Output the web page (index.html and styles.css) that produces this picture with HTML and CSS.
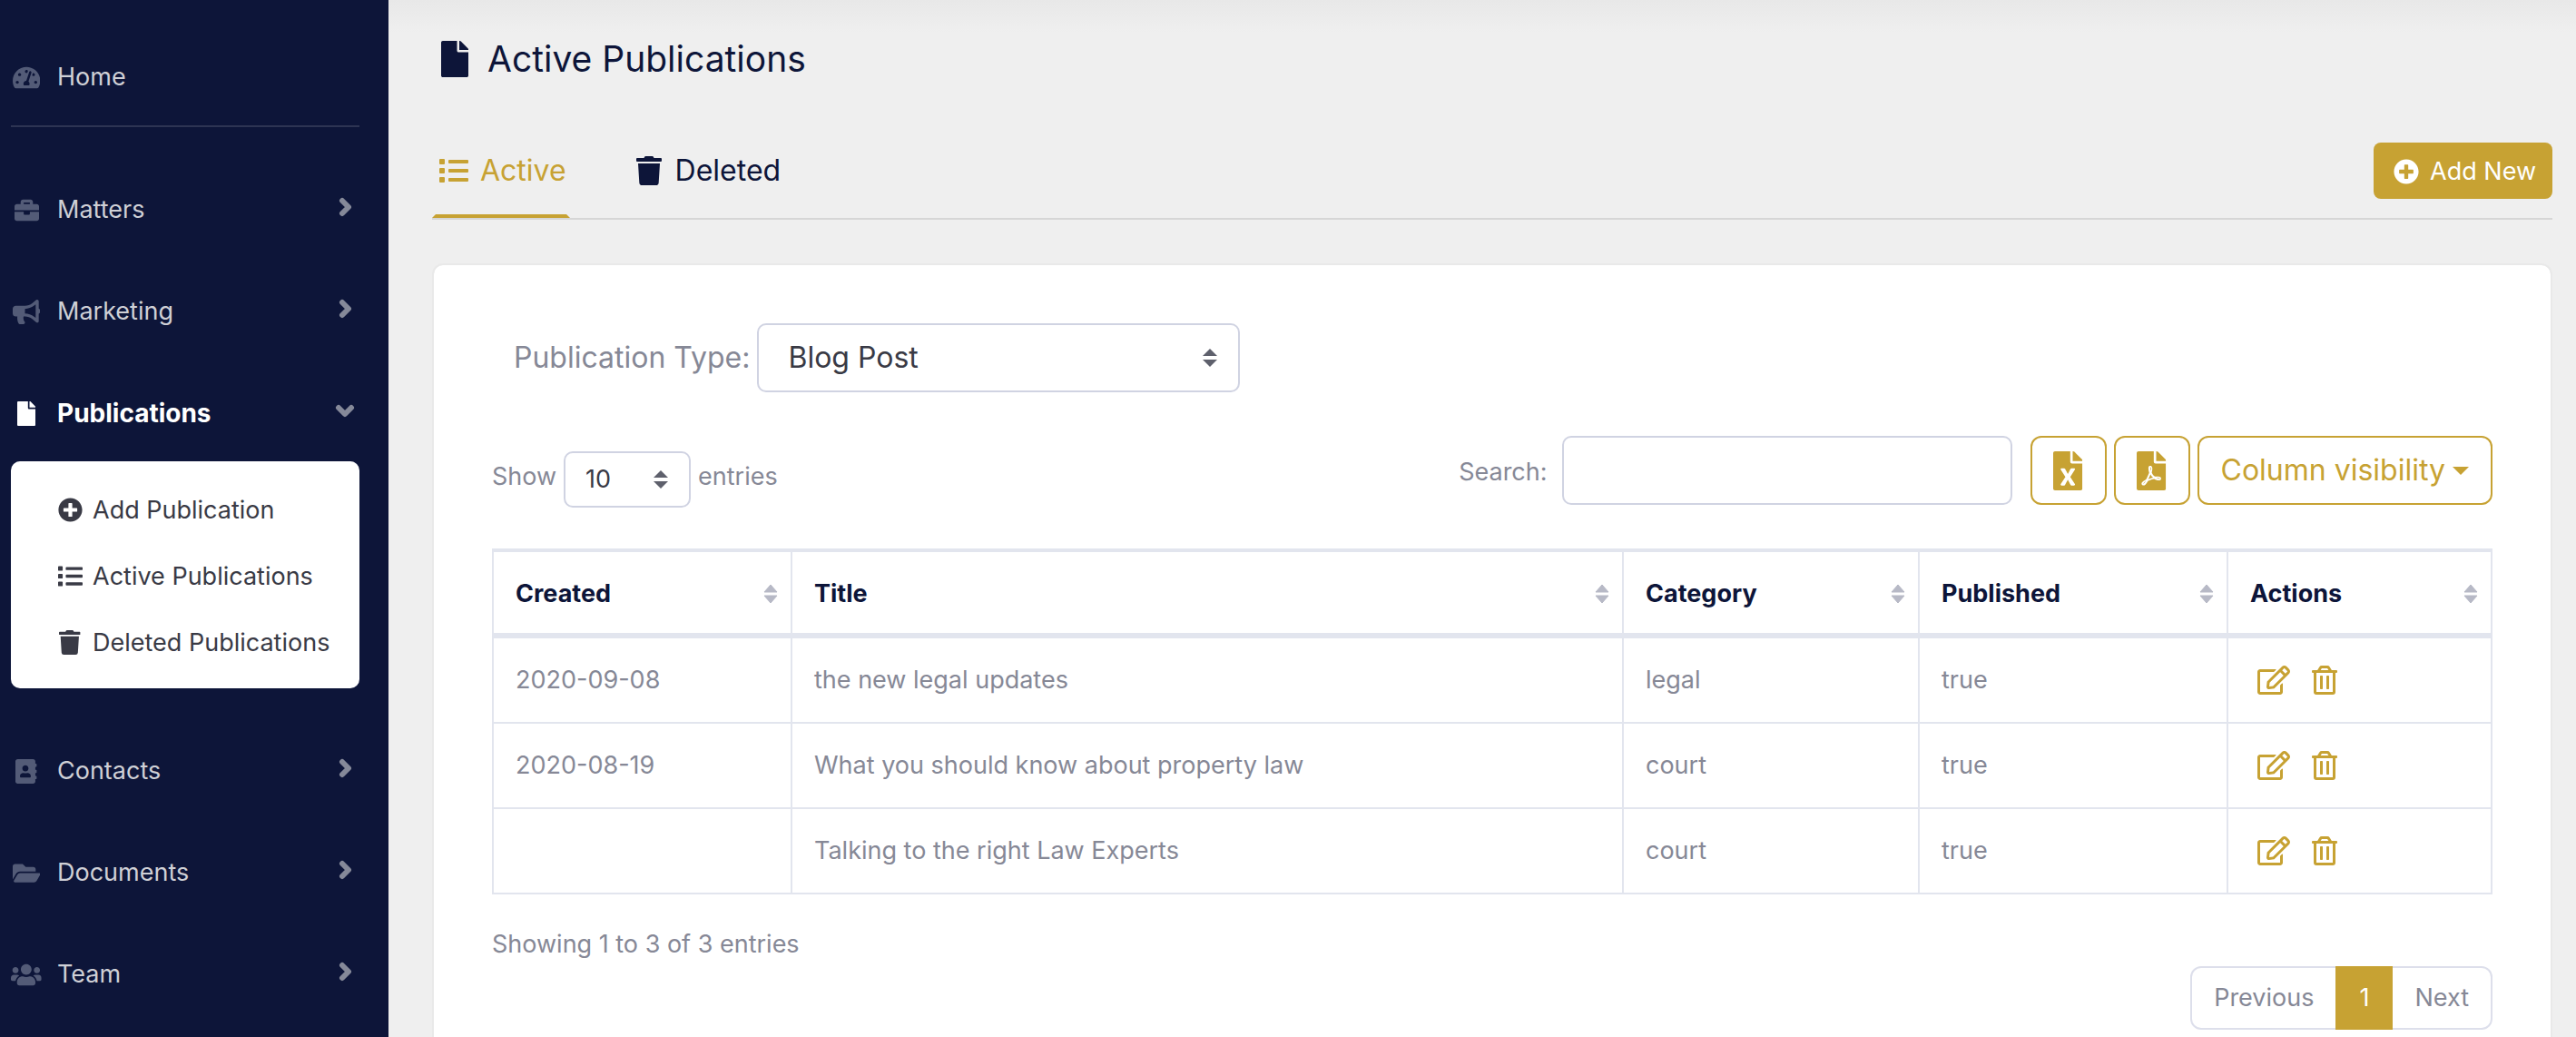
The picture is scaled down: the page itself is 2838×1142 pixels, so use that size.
FILE: index.html
```html
<!DOCTYPE html>
<html lang="en">
<head>
<meta charset="utf-8">
<meta name="viewport" content="width=device-width, initial-scale=1">
<title>Active Publications</title>
<link rel="stylesheet" href="styles.css">
</head>
<body>
<svg class="sprite" aria-hidden="true">
  <symbol id="i-gauge" viewBox="0 0 576 512"><path d="M288 32C128.940 32 0 160.940 0 320c0 52.800 14.250 102.260 39.060 144.800 5.610 9.620 16.300 15.200 27.440 15.200h443c11.140 0 21.830-5.580 27.440-15.200C561.750 422.260 576 372.800 576 320c0-159.060-128.940-288-288-288zm0 64c14.710 0 26.580 10.130 30.320 23.650-1.110 2.260-2.640 4.230-3.450 6.670l-9.220 27.670c-5.130 3.490-10.970 6.010-17.640 6.010-17.670 0-32-14.330-32-32S270.330 96 288 96zM96 384c-17.670 0-32-14.330-32-32s14.330-32 32-32 32 14.330 32 32-14.330 32-32 32zm48-160c-17.670 0-32-14.330-32-32s14.330-32 32-32 32 14.330 32 32-14.330 32-32 32zm246.770-72.410l-61.330 184C343.130 347.330 352 364.540 352 384c0 11.720-3.380 22.550-8.880 32H232.880c-5.500-9.450-8.880-20.280-8.880-32 0-33.940 26.500-61.430 59.900-63.590l61.340-184.010c4.170-12.560 17.730-19.450 30.360-15.170 12.570 4.190 19.350 17.790 15.170 30.360zm14.660 57.200l15.520-46.550c3.470-1.290 7.130-2.230 11.050-2.230 17.670 0 32 14.330 32 32s-14.330 32-32 32c-11.380-.010-20.890-6.280-26.570-15.220zM480 384c-17.670 0-32-14.330-32-32s14.330-32 32-32 32 14.330 32 32-14.330 32-32 32z"/></symbol>
  <symbol id="i-briefcase" viewBox="0 0 512 512"><path d="M320 336c0 8.840-7.160 16-16 16h-96c-8.840 0-16-7.160-16-16v-48H0v144c0 25.600 22.400 48 48 48h416c25.600 0 48-22.400 48-48V288H320v48zm144-208h-80V80c0-25.600-22.400-48-48-48H176c-25.600 0-48 22.400-48 48v48H48c-25.600 0-48 22.400-48 48v80h512v-80c0-25.600-22.400-48-48-48zm-144 0H192V96h128v32z"/></symbol>
  <symbol id="i-bullhorn" viewBox="0 0 576 512"><path d="M576 240c0-23.630-12.950-44.040-32-55.120V32.010C544 23.260 537.020 0 512 0c-7.120 0-14.190 2.380-19.980 7.020l-85.030 68.030C364.280 109.190 310.660 128 256 128H64c-35.350 0-64 28.650-64 64v96c0 35.350 28.650 64 64 64h33.700c-1.390 10.480-2.180 21.140-2.180 32 0 39.770 9.260 77.350 25.560 110.940 5.190 10.690 16.520 17.060 28.400 17.060h74.280c26.050 0 41.690-29.840 25.900-50.560-16.400-21.520-26.150-48.360-26.150-77.440 0-11.110 1.620-21.790 4.410-32H256c54.660 0 108.280 18.810 150.980 52.950l85.030 68.030a32.023 32.023 0 0 0 19.980 7.020c24.920 0 32-22.780 32-32V295.130C563.050 284.040 576 263.630 576 240zm-96 141.420l-33.050-26.440C392.950 311.780 325.120 288 256 288v-96c69.120 0 136.950-23.780 190.950-66.980L480 98.580v282.840z"/></symbol>
  <symbol id="i-file" viewBox="0 0 384 512"><path d="M224 136V0H24C10.700 0 0 10.700 0 24v464c0 13.300 10.700 24 24 24h336c13.300 0 24-10.700 24-24V160H248c-13.200 0-24-10.800-24-24zm160-14.100v6.100H256V0h6.100c6.400 0 12.500 2.500 17 7l97.900 98c4.500 4.500 7 10.600 7 16.900z"/></symbol>
  <symbol id="i-contacts" viewBox="0 0 448 512"><path d="M436 160c6.600 0 12-5.400 12-12v-40c0-6.600-5.400-12-12-12h-20V48c0-26.500-21.500-48-48-48H48C21.500 0 0 21.500 0 48v416c0 26.500 21.500 48 48 48h320c26.500 0 48-21.500 48-48v-48h20c6.600 0 12-5.400 12-12v-40c0-6.600-5.400-12-12-12h-20v-64h20c6.600 0 12-5.400 12-12v-40c0-6.600-5.400-12-12-12h-20v-64h20zm-228-32c35.300 0 64 28.700 64 64s-28.700 64-64 64-64-28.700-64-64 28.700-64 64-64zm112 236.800c0 10.600-10 19.200-22.400 19.200H118.400C106 384 96 375.400 96 364.800v-19.200c0-31.800 30.100-57.600 67.200-57.600h5c12.300 5.100 25.700 8 39.800 8s27.600-2.900 39.800-8h5c37.100 0 67.200 25.800 67.200 57.600v19.200z"/></symbol>
  <symbol id="i-folder" viewBox="0 0 576 512"><path d="M572.694 292.093L500.270 416.248A63.997 63.997 0 0 1 444.989 448H45.025c-18.523 0-30.064-20.093-20.731-36.093l72.424-124.155A64 64 0 0 1 152 256h399.964c18.523 0 30.064 20.093 20.730 36.093zM152 224h328v-48c0-26.510-21.490-48-48-48H272l-64-64H48C21.490 64 0 85.490 0 112v278.046l69.077-118.418C86.214 242.250 117.989 224 152 224z"/></symbol>
  <symbol id="i-users" viewBox="0 0 640 512"><path d="M96 224c35.300 0 64-28.700 64-64s-28.700-64-64-64-64 28.700-64 64 28.700 64 64 64zm448 0c35.300 0 64-28.700 64-64s-28.700-64-64-64-64 28.700-64 64 28.700 64 64 64zm32 32h-64c-17.600 0-33.500 7.100-45.100 18.600 40.300 22.100 68.900 62 75.100 109.400h66c17.700 0 32-14.300 32-32v-32c0-35.300-28.700-64-64-64zm-256 0c61.900 0 112-50.100 112-112S381.900 32 320 32 208 82.100 208 144s50.100 112 112 112zm76.800 32h-8.300c-20.800 10-43.900 16-68.500 16s-47.600-6-68.500-16h-8.300C179.600 288 128 339.600 128 403.200V432c0 26.500 21.500 48 48 48h288c26.500 0 48-21.500 48-48v-28.800c0-63.600-51.600-115.200-115.200-115.200zm-223.700-13.400C161.500 263.100 145.600 256 128 256H64c-35.300 0-64 28.700-64 64v32c0 17.700 14.300 32 32 32h65.900c6.300-47.400 34.900-87.300 75.200-109.400z"/></symbol>
  <symbol id="i-plus" viewBox="0 0 512 512"><path d="M256 8C119 8 8 119 8 256s111 248 248 248 248-111 248-248S393 8 256 8zm144 276c0 6.600-5.400 12-12 12h-92v92c0 6.600-5.400 12-12 12h-56c-6.600 0-12-5.400-12-12v-92h-92c-6.600 0-12-5.400-12-12v-56c0-6.600 5.400-12 12-12h92v-92c0-6.600 5.400-12 12-12h56c6.600 0 12 5.400 12 12v92h92c6.600 0 12 5.400 12 12v56z"/></symbol>
  <symbol id="i-list" viewBox="0 0 512 512"><path d="M80 368H16a16 16 0 0 0-16 16v64a16 16 0 0 0 16 16h64a16 16 0 0 0 16-16v-64a16 16 0 0 0-16-16zm0-320H16A16 16 0 0 0 0 64v64a16 16 0 0 0 16 16h64a16 16 0 0 0 16-16V64a16 16 0 0 0-16-16zm0 160H16a16 16 0 0 0-16 16v64a16 16 0 0 0 16 16h64a16 16 0 0 0 16-16v-64a16 16 0 0 0-16-16zm416 176H176a16 16 0 0 0-16 16v32a16 16 0 0 0 16 16h320a16 16 0 0 0 16-16v-32a16 16 0 0 0-16-16zm0-320H176a16 16 0 0 0-16 16v32a16 16 0 0 0 16 16h320a16 16 0 0 0 16-16V80a16 16 0 0 0-16-16zm0 160H176a16 16 0 0 0-16 16v32a16 16 0 0 0 16 16h320a16 16 0 0 0 16-16v-32a16 16 0 0 0-16-16z"/></symbol>
  <symbol id="i-trash" viewBox="0 0 448 512"><path d="M432 32H312l-9.400-18.700A24 24 0 0 0 281.100 0H166.800a23.720 23.720 0 0 0-21.400 13.300L136 32H16A16 16 0 0 0 0 48v32a16 16 0 0 0 16 16h416a16 16 0 0 0 16-16V48a16 16 0 0 0-16-16zM53.200 467a48 48 0 0 0 47.900 45h245.800a48 48 0 0 0 47.900-45L416 128H32z"/></symbol>
  <symbol id="i-trash-line" viewBox="0 0 448 512"><path d="M268 416h24a12 12 0 0 0 12-12V188a12 12 0 0 0-12-12h-24a12 12 0 0 0-12 12v216a12 12 0 0 0 12 12zM432 80h-82.410l-34-56.700A48 48 0 0 0 274.410 0H173.590a48 48 0 0 0-41.160 23.300L98.410 80H16A16 16 0 0 0 0 96v16a16 16 0 0 0 16 16h16v336a48 48 0 0 0 48 48h288a48 48 0 0 0 48-48V128h16a16 16 0 0 0 16-16V96a16 16 0 0 0-16-16zM171.840 50.910A6 6 0 0 1 177 48h94a6 6 0 0 1 5.150 2.910L293.610 80H154.390zM368 464H80V128h288zm-212-48h24a12 12 0 0 0 12-12V188a12 12 0 0 0-12-12h-24a12 12 0 0 0-12 12v216a12 12 0 0 0 12 12z"/></symbol>
  <symbol id="i-edit" viewBox="0 0 576 512"><path d="M402.300 344.900l32-32c5-5 13.700-1.500 13.700 5.700V464c0 26.500-21.500 48-48 48H48c-26.500 0-48-21.500-48-48V112c0-26.500 21.500-48 48-48h273.500c7.100 0 10.700 8.600 5.700 13.700l-32 32c-1.500 1.500-3.500 2.300-5.700 2.300H48v352h352V350.500c0-2.100.8-4.100 2.300-5.600zm156.600-201.800L296.300 405.700l-90.400 10c-26.200 2.900-48.500-19.200-45.600-45.600l10-90.400L432.900 17.100c22.900-22.900 59.900-22.900 82.700 0l43.200 43.200c22.900 22.900 22.900 60 .1 82.800zM460.100 174L402 115.900 216.200 301.800l-7.300 65.300 65.300-7.300L460.100 174zm64.800-79.700l-43.200-43.200c-4.100-4.100-10.800-4.100-14.800 0L436 82l58.100 58.100 30.900-30.900c4-4.200 4-10.800-.1-14.900z"/></symbol>
  <symbol id="i-excel" viewBox="0 0 384 512"><path d="M224 136V0H24C10.700 0 0 10.700 0 24v464c0 13.300 10.700 24 24 24h336c13.300 0 24-10.700 24-24V160H248c-13.200 0-24-10.800-24-24zm60.100 106.500L224 336l60.100 93.500c5.100 8-.6 18.500-10.100 18.500h-34.900c-4.400 0-8.500-2.400-10.600-6.300C208.900 405.500 192 373 192 373c-6.400 14.800-10 20-36.600 68.800-2.100 3.900-6.100 6.300-10.500 6.300H110c-9.500 0-15.200-10.500-10.100-18.500l60.300-93.500-60.300-93.500c-5.200-8 .6-18.500 10.100-18.500h34.800c4.400 0 8.500 2.400 10.600 6.300 26.100 48.800 20 33.600 36.600 68.500 0 0 6.100-11.700 36.600-68.500 2.100-3.900 6.200-6.300 10.600-6.300H274c9.500-.1 15.200 10.400 10.100 18.400zM384 121.900v6.100H256V0h6.100c6.400 0 12.500 2.500 17 7l97.900 98c4.500 4.500 7 10.600 7 16.900z"/></symbol>
  <symbol id="i-pdf" viewBox="0 0 384 512"><path d="M181.900 256.100c-5-16-4.900-46.900-2-46.900 8.400 0 7.600 36.900 2 46.900zm-1.700 47.200c-7.700 20.200-17.300 43.300-28.400 62.700 18.300-7 39-17.200 62.900-21.900-12.700-9.600-24.900-23.400-34.500-40.800zM86.100 428.100c0 .8 13.200-5.400 34.900-40.200-6.700 6.300-29.100 24.500-34.900 40.200zM248 160h136v328c0 13.300-10.700 24-24 24H24c-13.300 0-24-10.700-24-24V24C0 10.700 10.700 0 24 0h200v136c0 13.200 10.800 24 24 24zm-8 171.800c-20-12.200-33.300-29-42.700-53.800 4.500-18.500 11.600-46.600 6.200-64.200-4.700-29.400-42.400-26.500-47.800-6.800-5 18.300-.4 44.100 8.100 77-11.600 27.600-28.700 64.600-40.800 85.800-.1 0-.1.1-.2.1-27.100 13.900-73.600 44.500-54.500 68 5.600 6.900 16 10 21.500 10 17.900 0 35.700-18 61.100-61.800 25.800-8.500 54.100-19.100 79-23.200 21.700 11.800 47.100 19.500 64 19.500 29.200 0 31.200-32 19.700-43.400-13.900-13.600-54.300-9.700-73.600-7.200zM377 105L279 7c-4.500-4.500-10.600-7-17-7h-6v128h128v-6.100c0-6.300-2.500-12.400-7-16.900zm-74.100 255.300c4.100-2.700-2.500-11.900-42.800-9 37.100 15.800 42.800 9 42.800 9z"/></symbol>
  <symbol id="i-chevron" viewBox="0 0 22 22"><path d="M8 4l7 7-7 7" fill="none" stroke="currentColor" stroke-width="6" stroke-linecap="round" stroke-linejoin="round"/></symbol>
  <symbol id="i-sort" viewBox="0 0 16 22"><path d="M8 1l7 8H1zM8 21l7-8H1z" stroke="currentColor" stroke-width="1" stroke-linejoin="round"/></symbol>
  <symbol id="i-updown" viewBox="0 0 16 20"><path d="M8 0l8 8H0zM8 20l8-8H0z"/></symbol>
  <symbol id="i-caret" viewBox="0 0 18 9"><path d="M0 0h18L9 9z"/></symbol>
</svg>
<div class="app">
  <nav class="sidebar" aria-label="Main">
    <a class="nav-item" href="#home"><span class="nav-icon"><svg viewBox="0 0 576 512"><use href="#i-gauge"/></svg></span>Home</a>
    <hr class="nav-rule">
    <ul class="nav-list">
      <li><a class="nav-item" href="#matters"><span class="nav-icon"><svg viewBox="0 0 512 512"><use href="#i-briefcase"/></svg></span>Matters<svg class="chevron" viewBox="0 0 22 22"><use href="#i-chevron"/></svg></a></li>
      <li><a class="nav-item" href="#marketing"><span class="nav-icon"><svg viewBox="0 0 576 512"><use href="#i-bullhorn"/></svg></span>Marketing<svg class="chevron" viewBox="0 0 22 22"><use href="#i-chevron"/></svg></a></li>
      <li class="open">
        <a class="nav-item current" href="#publications"><span class="nav-icon"><svg viewBox="0 0 384 512"><use href="#i-file"/></svg></span>Publications<svg class="chevron down" viewBox="0 0 22 22"><use href="#i-chevron"/></svg></a>
        <ul class="submenu">
          <li><a href="#add"><span class="sub-icon"><svg viewBox="0 0 512 512"><use href="#i-plus"/></svg></span>Add Publication</a></li>
          <li><a href="#active"><span class="sub-icon"><svg viewBox="0 0 512 512"><use href="#i-list"/></svg></span>Active Publications</a></li>
          <li><a href="#deleted"><span class="sub-icon"><svg viewBox="0 0 448 512"><use href="#i-trash"/></svg></span>Deleted Publications</a></li>
        </ul>
      </li>
      <li><a class="nav-item" href="#contacts"><span class="nav-icon"><svg viewBox="0 0 448 512"><use href="#i-contacts"/></svg></span>Contacts<svg class="chevron" viewBox="0 0 22 22"><use href="#i-chevron"/></svg></a></li>
      <li><a class="nav-item" href="#documents"><span class="nav-icon"><svg viewBox="0 0 576 512"><use href="#i-folder"/></svg></span>Documents<svg class="chevron" viewBox="0 0 22 22"><use href="#i-chevron"/></svg></a></li>
      <li><a class="nav-item" href="#team"><span class="nav-icon"><svg viewBox="0 0 640 512"><use href="#i-users"/></svg></span>Team<svg class="chevron" viewBox="0 0 22 22"><use href="#i-chevron"/></svg></a></li>
    </ul>
  </nav>

  <main class="main">
    <h1 class="page-title"><svg viewBox="0 0 384 512"><use href="#i-file"/></svg>Active Publications</h1>

    <div class="tabs">
      <a class="tab active" href="#active"><svg viewBox="0 0 512 512"><use href="#i-list"/></svg>Active</a>
      <a class="tab" href="#deleted"><svg viewBox="0 0 448 512"><use href="#i-trash"/></svg>Deleted</a>
      <button class="add-new" type="button"><svg viewBox="0 0 512 512"><use href="#i-plus"/></svg>Add New</button>
    </div>

    <section class="card">
      <div class="filter">
        <label for="type">Publication Type:</label>
        <span class="select select-lg">
          <select id="type"><option>Blog Post</option></select>
          <svg viewBox="0 0 16 20"><use href="#i-updown"/></svg>
        </span>
      </div>

      <div class="toolbar">
        <div class="length">
          <label for="length">Show</label>
          <span class="select select-sm">
            <select id="length"><option>10</option></select>
            <svg viewBox="0 0 16 20"><use href="#i-updown"/></svg>
          </span>
          <span>entries</span>
        </div>
        <div class="tools">
          <label for="search">Search:</label>
          <input id="search" class="search" type="search">
          <button class="tool tool-icon" type="button" aria-label="Export to Excel"><svg viewBox="0 0 384 512"><use href="#i-excel"/></svg></button>
          <button class="tool tool-icon" type="button" aria-label="Export to PDF"><svg viewBox="0 0 384 512"><use href="#i-pdf"/></svg></button>
          <button class="tool tool-menu" type="button">Column visibility<svg class="caret" viewBox="0 0 18 9"><use href="#i-caret"/></svg></button>
        </div>
      </div>

      <table class="grid">
        <colgroup><col class="c-created"><col><col class="c-category"><col class="c-published"><col class="c-actions"></colgroup>
        <thead>
          <tr>
            <th scope="col"><button type="button">Created<svg viewBox="0 0 16 22"><use href="#i-sort"/></svg></button></th>
            <th scope="col"><button type="button">Title<svg viewBox="0 0 16 22"><use href="#i-sort"/></svg></button></th>
            <th scope="col"><button type="button">Category<svg viewBox="0 0 16 22"><use href="#i-sort"/></svg></button></th>
            <th scope="col"><button type="button">Published<svg viewBox="0 0 16 22"><use href="#i-sort"/></svg></button></th>
            <th scope="col"><button type="button">Actions<svg viewBox="0 0 16 22"><use href="#i-sort"/></svg></button></th>
          </tr>
        </thead>
        <tbody>
          <tr>
            <td>2020-09-08</td><td>the new legal updates</td><td>legal</td><td>true</td>
            <td><div class="actions"><a href="#edit-1" aria-label="Edit"><svg viewBox="0 0 576 512"><use href="#i-edit"/></svg></a><a href="#delete-1" aria-label="Delete"><svg viewBox="0 0 448 512"><use href="#i-trash-line"/></svg></a></div></td>
          </tr>
          <tr>
            <td>2020-08-19</td><td>What you should know about property law</td><td>court</td><td>true</td>
            <td><div class="actions"><a href="#edit-2" aria-label="Edit"><svg viewBox="0 0 576 512"><use href="#i-edit"/></svg></a><a href="#delete-2" aria-label="Delete"><svg viewBox="0 0 448 512"><use href="#i-trash-line"/></svg></a></div></td>
          </tr>
          <tr>
            <td></td><td>Talking to the right Law Experts</td><td>court</td><td>true</td>
            <td><div class="actions"><a href="#edit-3" aria-label="Edit"><svg viewBox="0 0 576 512"><use href="#i-edit"/></svg></a><a href="#delete-3" aria-label="Delete"><svg viewBox="0 0 448 512"><use href="#i-trash-line"/></svg></a></div></td>
          </tr>
        </tbody>
      </table>

      <p class="info">Showing 1 to 3 of 3 entries</p>
      <nav class="pager" aria-label="Pages">
        <a href="#prev">Previous</a><a class="page-current" href="#1" aria-current="page">1</a><a href="#next">Next</a>
      </nav>
    </section>
  </main>
</div>
</body>
</html>
```
FILE: styles.css
```css
:root {
  --navy: #0d1539;
  --gold: #c7a233;
  --muted: #868896;
  --ink: #393a45;
  --line: #e2e5ee;
  --field: #d0d3e2;
}

* { box-sizing: border-box; }

body {
  margin: 0;
  font-family: Inter, "Liberation Sans", sans-serif;
  font-size: 27px;
  line-height: 40px;
  color: var(--muted);
}

a { color: inherit; text-decoration: none; }
ul { list-style: none; margin: 0; padding: 0; }
button, input, select { font: inherit; color: inherit; margin: 0; }
button { cursor: pointer; }
svg { fill: currentColor; flex: none; }
.sprite { display: none; }

.app {
  display: grid;
  grid-template-columns: 428px minmax(0, 1fr);
  height: 100vh;
}

/* Sidebar */
.sidebar {
  background: var(--navy);
  color: #cfd0d6;
  padding: 30px 32px 0 12px;
  overflow-y: auto;
  scrollbar-width: none;
}

.nav-item {
  display: flex;
  align-items: center;
  height: 108px;
  padding-top: 2px;
}

.nav-icon {
  display: flex;
  justify-content: center;
  width: 34px;
  margin-right: 17px;
  color: #535b77;
}

.nav-icon svg { height: 27px; }

.chevron {
  width: 22px;
  margin: 0 5px 6px auto;
  color: #858999;
}

.chevron.down { transform: rotate(90deg); }

.current { color: #fff; font-size: 28px; font-weight: 700; }
.current .nav-icon { color: #fff; }

.nav-rule {
  height: 2px;
  margin: 0 0 36px;
  border: 0;
  background: #2d3453;
}

.nav-list { display: grid; gap: 4px; }
.open { padding-bottom: 32px; }

.submenu {
  padding: 17px 0 14px;
  border-radius: 10px;
  background: #fff;
  color: var(--ink);
}

.submenu a {
  display: flex;
  align-items: center;
  height: 73px;
  padding-left: 48px;
}

.sub-icon {
  display: flex;
  justify-content: center;
  width: 34px;
  margin-right: 8px;
}

.sub-icon svg { height: 27px; }

/* Main column */
.main {
  padding: 38px 26px 0 48px;
  background: linear-gradient(#e8e8e8, #efefef 36px);
  overflow-y: auto;
  scrollbar-width: none;
}

.page-title {
  display: flex;
  align-items: center;
  gap: 21px;
  margin: 0;
  padding-left: 10px;
  font-size: 39px;
  line-height: 53px;
  font-weight: 400;
  color: var(--navy);
}

.page-title svg { height: 40px; }

.tabs {
  display: flex;
  gap: 63px;
  margin-top: 45px;
  border-bottom: 2px solid #d6d6d6;
  font-size: 32px;
  color: var(--navy);
}

.tab {
  display: flex;
  align-items: center;
  gap: 13px;
  height: 104px;
  padding: 4px 0 0 4px;
  border: 4px solid transparent;
  border-top-width: 0;
}

.tab svg { width: 32px; height: 32px; }
.tab.active { color: var(--gold); border-bottom-color: var(--gold); }

.add-new {
  display: flex;
  align-items: center;
  gap: 12px;
  height: 62px;
  margin: 21px 0 0 auto;
  padding: 2px 18px 0 22px;
  border: 0;
  border-radius: 8px;
  background: var(--gold);
  color: #fff;
  font-size: 27px;
}

.add-new svg { height: 28px; }

.card {
  margin-top: 48px;
  padding: 64px;
  border: 2px solid #e9e9e9;
  border-radius: 12px;
  background: #fff;
  background-clip: padding-box;
}

.filter {
  display: flex;
  align-items: center;
  gap: 8px;
  padding-left: 24px;
  font-size: 32px;
}

.select { display: inline-grid; align-items: center; }
.select > * { grid-area: 1 / 1; }

.select select {
  width: 100%;
  height: 100%;
  appearance: none;
  border: 2px solid var(--field);
  border-radius: 10px;
  background: #fff;
  color: var(--ink);
}

.select svg {
  width: 16px;
  height: 20px;
  justify-self: end;
  margin-right: 25px;
  color: #5e606c;
  pointer-events: none;
}

.select-lg { width: 532px; height: 76px; }
.select-lg select { padding: 0 32px; }
.select-sm { width: 140px; height: 62px; }
.select-sm select { padding: 0 22px; }

.toolbar {
  display: flex;
  justify-content: space-between;
  height: 79px;
  margin: 48px 0 45px;
}

.length {
  display: flex;
  align-items: flex-start;
  align-self: flex-end;
  gap: 8px;
  line-height: 56px;
}

.tools {
  display: flex;
  align-items: center;
  align-self: flex-start;
  gap: 8px;
}

.tools label { padding-top: 3px; }

.search {
  width: 496px;
  height: 76px;
  margin: 0 12px 0 8px;
  padding: 0 32px;
  border: 2px solid var(--field);
  border-radius: 10px;
  background: #fff;
  color: var(--ink);
}

.tool {
  display: flex;
  align-items: center;
  justify-content: center;
  height: 76px;
  border: 2px solid var(--gold);
  border-radius: 12px;
  background: #fff;
  color: var(--gold);
  font-size: 32px;
}

.tool-icon { width: 84px; padding: 0; }
.tool-icon svg { height: 43px; }
.tool-menu { gap: 8px; padding: 0 24px; }
.caret { width: 18px; height: 9px; }

/* Data table */
.grid {
  width: 100%;
  table-layout: fixed;
  border-collapse: separate;
  border-spacing: 0;
  border-top: 4px solid var(--line);
  border-right: 2px solid var(--line);
}

.c-created { width: 329px; }
.c-category { width: 326px; }
.c-published { width: 340px; }
.c-actions { width: 291px; }

.grid th {
  padding: 0;
  border-left: 2px solid var(--line);
  border-bottom: 6px solid var(--line);
}

.grid th button {
  display: flex;
  align-items: center;
  justify-content: space-between;
  width: 100%;
  height: 89px;
  padding: 3px 14px 0 24px;
  border: 0;
  background: none;
  color: var(--navy);
  font-weight: 700;
}

.grid th svg { width: 16px; height: 22px; color: #b7b9c6; }

.grid td {
  height: 94px;
  padding: 0 24px;
  border-left: 2px solid var(--line);
  border-bottom: 2px solid var(--line);
}

.actions {
  display: flex;
  gap: 24px;
  padding: 0 0 0 8px;
  color: var(--gold);
}

.actions a { display: flex; }
.actions svg { height: 32px; }

.info { margin: 35px 0 4px; }

.pager {
  display: flex;
  width: max-content;
  height: 70px;
  margin-left: auto;
  border: 2px solid #dddfeb;
  border-radius: 12px;
  line-height: 66px;
}

.pager a { padding: 0 24px; }

.pager .page-current {
  margin: -2px 0;
  padding: 0 26px;
  background: var(--gold);
  color: #fff;
  line-height: 70px;
}
```
